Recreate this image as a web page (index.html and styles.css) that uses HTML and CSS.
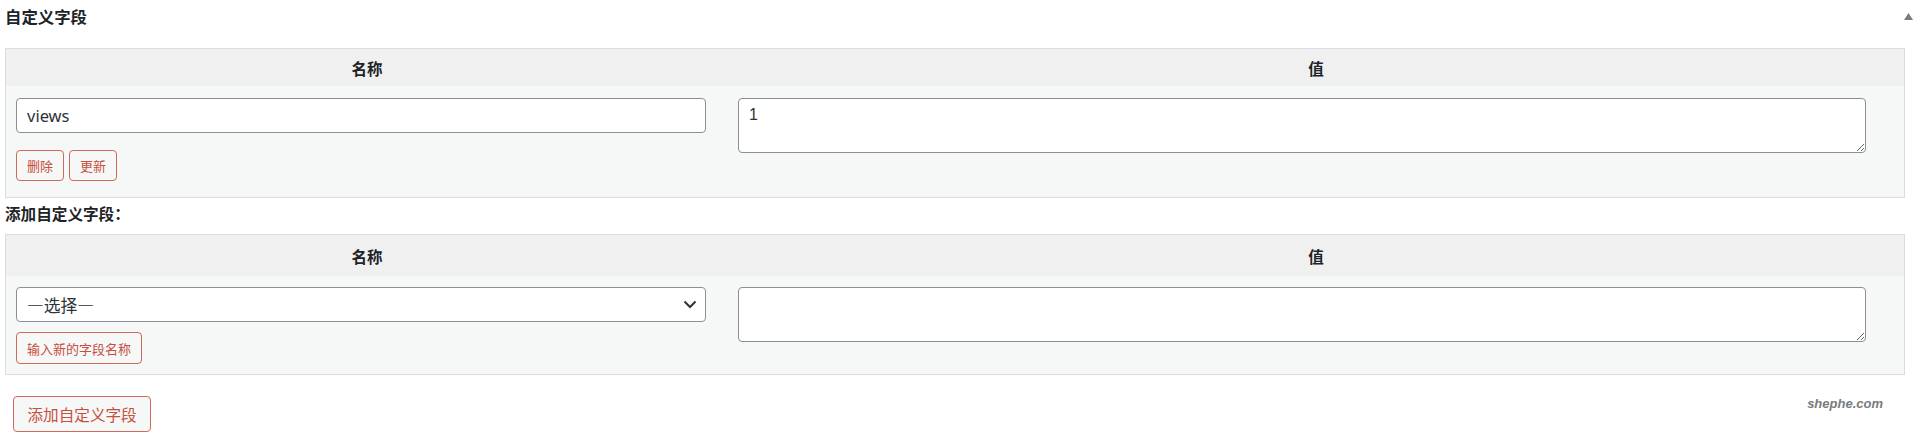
FILE: index.html
```html
<!DOCTYPE html>
<html lang="zh-CN">
<head>
<meta charset="utf-8">
<title>自定义字段</title>
<link rel="stylesheet" href="styles.css">
</head>
<body>
<div class="box">
  <div class="box-head">
    <h2 class="box-title">自定义字段</h2>
    <svg class="toggle" width="9" height="7" viewBox="0 0 9 7"><polygon points="4.5,0 9,7 0,7" fill="#787c82"/></svg>
  </div>

  <div class="ftable ftable-list">
    <div class="fhead">
      <div class="fth">名称</div>
      <div class="fth">值</div>
    </div>
    <div class="frow">
      <div class="fcell fcell-left">
        <input class="ftext" type="text" value="views">
        <div class="btns">
          <button class="btn-small">删除</button>
          <button class="btn-small">更新</button>
        </div>
      </div>
      <div class="fcell fcell-right">
        <textarea class="farea">1</textarea>
      </div>
    </div>
  </div>

  <p class="add-label">添加自定义字段：</p>

  <div class="ftable ftable-new">
    <div class="fhead fhead-new">
      <div class="fth">名称</div>
      <div class="fth">值</div>
    </div>
    <div class="frow frow-new">
      <div class="fcell fcell-left">
        <div class="select-wrap">
          <div class="fselect">—选择—</div>
          <svg class="chev" width="14" height="9" viewBox="0 0 14 9"><polyline points="1.5,1.5 7,7 12.5,1.5" fill="none" stroke="#2c3338" stroke-width="2"/></svg>
        </div>
        <div class="btns btns-new">
          <button class="btn-small">输入新的字段名称</button>
        </div>
      </div>
      <div class="fcell fcell-right">
        <textarea class="farea"></textarea>
      </div>
    </div>
  </div>

  <div class="foot">
    <button class="btn-big">添加自定义字段</button>
    <span class="brand">shephe.com</span>
  </div>
</div>
</body>
</html>
```

FILE: styles.css
```css
html, body {
  margin: 0;
  padding: 0;
  background: #ffffff;
}
body {
  font-family: "Noto Sans", "Noto Sans CJK SC", sans-serif;
  color: #1d2327;
}
.box {
  padding: 0 7px 0 5px;
}
.box-head {
  height: 31px;
  display: flex;
  align-items: center;
  justify-content: space-between;
}
.box-title {
  margin: 0;
  font-family: "Noto Sans CJK SC", sans-serif;
  font-size: 16.4px;
  font-weight: 700;
  line-height: 30px;
  color: #1d2327;
}
.toggle {
  margin-top: 2px;
  margin-right: 0;
}
.ftable {
  margin-right: 8px;
  border: 1px solid #dcdcde;
  background: #f6f7f7;
}
.ftable-list {
  margin-top: 17px;
}
.fhead {
  display: grid;
  grid-template-columns: 722px 1fr;
  height: 37px;
  background: #f0f0f1;
}
.fhead-new {
  height: 41px;
}
.fth {
  display: flex;
  align-items: center;
  justify-content: center;
  font-family: "Noto Sans CJK SC", sans-serif;
  font-size: 15.5px;
  font-weight: 700;
  color: #1d2327;
}
.frow {
  display: grid;
  grid-template-columns: 722px 1fr;
  padding: 12px 0 16px;
}
.frow-new {
  padding: 11px 0 10px;
}
.fcell-left {
  padding: 0 22px 0 10px;
}
.fcell-right {
  padding: 0 38px 0 10px;
}
.ftext, .fselect {
  box-sizing: border-box;
  display: block;
  width: 100%;
  height: 35px;
  margin: 0;
  padding: 0 10px;
  border: 1px solid #8c8f94;
  border-radius: 4px;
  background: #ffffff;
  font-family: "Noto Sans", "Noto Sans CJK SC", sans-serif;
  font-size: 16.5px;
  color: #2c3338;
  outline: none;
}
.fselect {
  display: flex;
  align-items: center;
  font-family: "Noto Sans CJK SC", sans-serif;
  font-size: 16.8px;
}
.select-wrap {
  position: relative;
}
.chev {
  position: absolute;
  right: 9px;
  top: 13px;
}
.farea {
  box-sizing: border-box;
  display: block;
  width: 100%;
  height: 55px;
  margin: 0;
  padding: 6px 10px;
  border: 1px solid #8c8f94;
  border-radius: 4px;
  background: #ffffff;
  font-family: "Liberation Sans", sans-serif;
  font-size: 16px;
  line-height: 20px;
  color: #2c3338;
  resize: vertical;
  outline: none;
}
.btns {
  display: flex;
  gap: 5px;
  margin-top: 17px;
}
.btns-new {
  margin-top: 10px;
}
.btn-small {
  box-sizing: border-box;
  height: 31px;
  margin: 0;
  padding: 0 10px;
  border: 1px solid #cf6a5a;
  border-radius: 4px;
  background: #f6f7f7;
  font-family: "Noto Sans CJK SC", sans-serif;
  font-size: 13px;
  color: #c64f3d;
  cursor: pointer;
}
.btns-new .btn-small {
  height: 32px;
}
.add-label {
  margin: 0 0 6px;
  font-family: "Noto Sans CJK SC", sans-serif;
  font-size: 15.6px;
  font-weight: 700;
  line-height: 30px;
  color: #1d2327;
}
.foot {
  display: flex;
  justify-content: space-between;
  align-items: flex-start;
  margin-top: 21px;
  margin-right: 30px;
}
.btn-big {
  box-sizing: border-box;
  height: 36px;
  margin: 0 0 0 8px;
  padding: 0 13.5px;
  border: 1px solid #cf6a5a;
  border-radius: 4px;
  background: #f6f7f7;
  font-family: "Noto Sans CJK SC", sans-serif;
  font-size: 15.6px;
  color: #c64f3d;
  cursor: pointer;
}
.brand {
  margin-top: 0px;
  font-family: "Liberation Sans", sans-serif;
  font-size: 13px;
  font-weight: 700;
  font-style: italic;
  line-height: 16px;
  color: #7b7b7b;
}
```
